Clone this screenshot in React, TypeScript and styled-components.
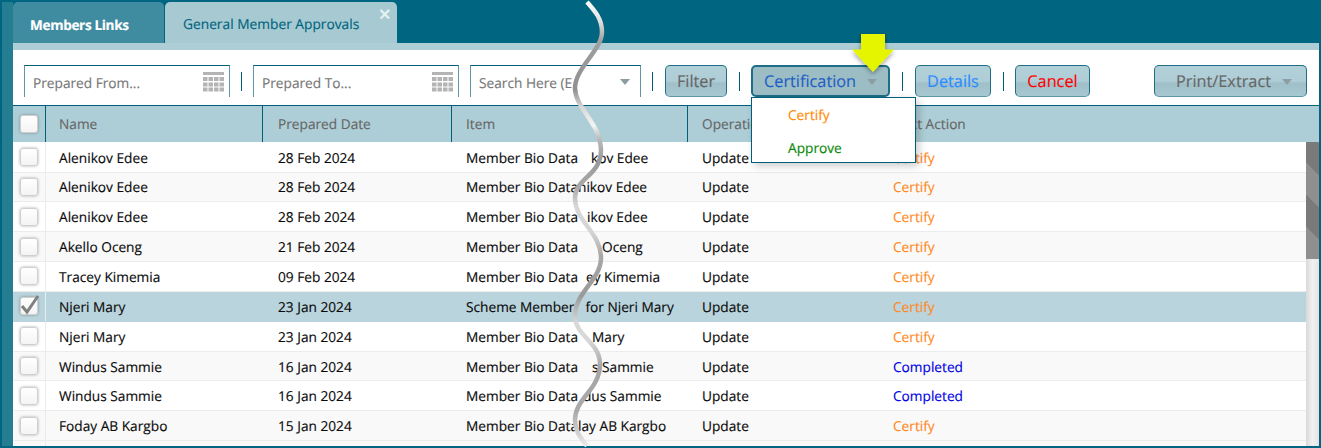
import React from "react";
import styled, { createGlobalStyle } from "styled-components";

const Global = createGlobalStyle`
  html, body { margin: 0; padding: 0; background: #006580; }
  body {
    width: 1321px; height: 448px; overflow: hidden;
    font-family: "Open Sans", "Liberation Sans", sans-serif;
    text-rendering: geometricPrecision;
    -webkit-text-stroke: 0.15px currentColor;
  }
  * { box-sizing: border-box; }
`;

const COLS = "33px 217px 189px 236px 190px 1fr";

const Shell = styled.div`
  position: relative;
  width: 1321px;
  height: 448px;
  display: flex;
  border: 2px solid #006580;
  background: #006580;
`;
const Rail = styled.div`
  width: 11px;
  flex: none;
  background: #257d92;
`;
const Main = styled.div`
  flex: 1;
  min-width: 0;
  display: flex;
  flex-direction: column;
`;
const Tabs = styled.div`
  height: 41px;
  flex: none;
  display: flex;
  gap: 1px;
`;
const Tab = styled.div<{ $active?: boolean }>`
  position: relative;
  width: ${(p) => (p.$active ? 232 : 151)}px;
  border-radius: 5px 5px 0 0;
  padding-left: ${(p) => (p.$active ? 18 : 17)}px;
  line-height: 45px;
  font-size: ${(p) => (p.$active ? 13.75 : 13.6)}px;
  font-weight: ${(p) => (p.$active ? 400 : 700)};
  letter-spacing: ${(p) => (p.$active ? 0 : -0.35)}px;
  color: ${(p) => (p.$active ? "#006580" : "#fff")};
  background: ${(p) => (p.$active ? "#a7cad2" : "#3f8b9f")};
`;
const Close = styled.span`
  position: absolute;
  top: 4px;
  right: 6px;
  font-size: 22px;
  font-weight: 600;
  line-height: 16px;
  color: #e8f2f4;
`;
const Strip = styled.div`
  height: 7px;
  flex: none;
  background: #aeced7;
`;
const Toolbar = styled.div`
  height: 55px;
  flex: none;
  display: flex;
  align-items: flex-start;
  padding: 15px 12px 0 11px;
  background: #fff;
`;
const Field = styled.div<{ $w: number }>`
  width: ${(p) => p.$w}px;
  height: 32px;
  flex: none;
  display: flex;
  align-items: center;
  justify-content: space-between;
  padding: 3px 5px 0 8px;
  border: 1px solid #5e98a8;
  border-top-color: #00607a;
  border-bottom: 0;
  font-size: 13.7px;
  color: #777;
  overflow: hidden;
  white-space: nowrap;
  & > svg { margin-top: -2px; }
`;
const Gap = styled.div`
  width: 11px;
  flex: none;
`;
const Sep = styled.div<{ $l?: number; $r?: number }>`
  width: 1px;
  height: 19px;
  margin: 7px ${(p) => p.$r ?? 11}px 0 ${(p) => p.$l ?? 11}px;
  flex: none;
  background: #00607a;
`;
const Btn = styled.div<{ $w: number; $color: string; $strong?: boolean; $pad?: number }>`
  position: relative;
  width: ${(p) => p.$w}px;
  height: 32px;
  flex: none;
  display: flex;
  align-items: center;
  justify-content: ${(p) => (p.$pad ? "flex-start" : "center")};
  padding-left: ${(p) => p.$pad ?? 0}px;
  gap: 11px;
  font-size: 16.3px;
  color: ${(p) => p.$color};
  border: ${(p) => (p.$strong ? 2 : 1)}px solid #1c6f86;
  ${(p) => (!p.$strong ? "border-bottom-color:#5e98a8;" : "")}
  border-radius: 5px;
  background: ${(p) =>
    p.$strong
      ? "#9dbdc5"
      : "linear-gradient(#b1d0d8 0, #aecdd6 50%, #a0c0c9 58%, #a7c8d1 100%)"};
`;
const Caret = styled.span<{ $color?: string }>`
  width: 0;
  height: 0;
  flex: none;
  margin-top: 2px;
  border-left: 5.5px solid transparent;
  border-right: 5.5px solid transparent;
  border-top: 6px solid ${(p) => p.$color ?? "#8d9ea3"};
`;
const SearchCaret = styled(Caret)`
  margin: 0 5px 2px 0;
`;
const Menu = styled.div`
  position: absolute;
  z-index: 3;
  top: 30px;
  left: -2px;
  width: 165px;
  height: 66px;
  padding-left: 36px;
  background: #fff;
  border: 1px solid #00607a;
  box-shadow: 3px 3px 8px rgba(0, 0, 0, 0.2);
  font-size: 13.7px;
`;
const MenuItem = styled.div<{ $color: string }>`
  height: 33px;
  line-height: 36px;
  color: ${(p) => p.$color};
`;
const RightBtn = styled.div`
  margin-left: auto;
  flex: none;
`;
const Head = styled.div`
  height: 37px;
  flex: none;
  display: grid;
  grid-template-columns: ${COLS};
  border-top: 1px solid #00607a;
  background: #aeced7;
  font-size: 13.7px;
  color: #666;
`;
const HeadCell = styled.div`
  display: flex;
  align-items: center;
  padding: 1px 0 0 14px;
  white-space: nowrap;
  border-right: 1px solid #00607a;
  &:nth-child(2) { padding-left: 13px; }
  &:nth-child(3) { padding-left: 15px; }
  &:last-child { border-right: 0; }
`;
const BoxCell = styled.div<{ $line: string }>`
  display: flex;
  align-items: center;
  padding-left: 7px;
  border-right: 1px solid ${(p) => p.$line};
`;
const Box = styled.div`
  position: relative;
  width: 18px;
  height: 18px;
  border-radius: 3px;
  background: linear-gradient(#fff, #f4f4f4);
  border: 1px solid #cfcfcf;
  box-shadow: 0 0 3px rgba(0, 0, 0, 0.32);
`;
const Tick = styled.svg`
  position: absolute;
  left: -1px;
  top: -5px;
`;
const Body = styled.div`
  flex: 1;
  min-height: 0;
  display: flex;
  overflow: hidden;
  background: #fff;
`;
const Rows = styled.div`
  flex: 1;
  min-width: 0;
  padding-top: 0.7px;
`;
const Row = styled.div<{ $bg: string }>`
  height: 29.85px;
  display: grid;
  grid-template-columns: ${COLS};
  border-bottom: 1px solid ${(p) => (p.$bg === "#b9d4dc" ? "#b9d4dc" : "#ececec")};
  background: ${(p) => p.$bg};
  font-size: 13.7px;
  color: #0a0a0a;
`;
const Cell = styled.div<{ $color?: string }>`
  display: flex;
  align-items: center;
  padding: 2px 0 0 14px;
  white-space: nowrap;
  color: ${(p) => p.$color ?? "inherit"};
  &:nth-child(2) { padding-left: 13px; }
  &:nth-child(3) { padding-left: 15px; }
  &:nth-child(6) { padding-left: 15px; }
`;
const Tail = styled.span<{ $gap: number }>`
  margin-left: ${(p) => p.$gap}px;
`;
const Scroll = styled.div`
  width: 13px;
  flex: none;
  display: flex;
  flex-direction: column;
  background: linear-gradient(90deg, #d8d8d8, #f1f1f1 50%, #e4e4e4);
`;
const Thumb = styled.div`
  height: 117px;
  background: repeating-linear-gradient(
    45deg,
    #8f8f8f 0 22.8px,
    #7a7a7a 22.8px 45.6px
  );
`;
const Overlay = styled.svg`
  position: absolute;
  z-index: 5;
  left: -2px;
  top: -2px;
  pointer-events: none;
`;

const Cal = () => (
  <svg width="21" height="21" viewBox="0 0 21 21" fill="#b4b4b4">
    <rect x="0" y="0" width="21" height="3" />
    {[5, 10, 15].map((y, j) =>
      [0, 5.5, 11, 16.5].map((x) => (
        <rect key={`${x}-${y}`} x={x} y={y + (j ? 0.5 : 0)} width="4.5" height="4" />
      ))
    )}
  </svg>
);

type R = { name: string; date: string; item: string; tail?: string; gap?: number; next: string };
const data: R[] = [
  { name: "Alenikov Edee", date: "28 Feb 2024", item: "Member Bio Data", tail: "kov Edee", gap: 13, next: "Certify" },
  { name: "Alenikov Edee", date: "28 Feb 2024", item: "Member Bio Data", tail: "nikov Edee", gap: 0, next: "Certify" },
  { name: "Alenikov Edee", date: "28 Feb 2024", item: "Member Bio Data", tail: "ikov Edee", gap: 9, next: "Certify" },
  { name: "Akello Oceng", date: "21 Feb 2024", item: "Member Bio Data", tail: "Oceng", gap: 24, next: "Certify" },
  { name: "Tracey Kimemia", date: "09 Feb 2024", item: "Member Bio Data", tail: "ey Kimemia", gap: 8, next: "Certify" },
  { name: "Njeri Mary", date: "23 Jan 2024", item: "Scheme Member", tail: "for Njeri Mary", gap: 11, next: "Certify" },
  { name: "Njeri Mary", date: "23 Jan 2024", item: "Member Bio Data", tail: "Mary", gap: 14, next: "Certify" },
  { name: "Windus Sammie", date: "16 Jan 2024", item: "Member Bio Data", tail: "s Sammie", gap: 14, next: "Completed" },
  { name: "Windus Sammie", date: "16 Jan 2024", item: "Member Bio Data", tail: "dus Sammie", gap: 5, next: "Completed" },
  { name: "Foday AB Kargbo", date: "15 Jan 2024", item: "Member Bio Data", tail: "lay AB Kargbo", gap: 0, next: "Certify" },
];

const wave =
  "M587 2 C594 10 602 18 602 32 C602 50 575 68 575 88 C575 108 600 122 601 150 C601 176 575 178 575 198 C575 222 601 232 601 258 C601 280 575 292 575 316 C575 336 600 342 600 364 C600 390 575 398 575 420 C575 432 581 438 587 446";

export default function App() {
  return (
    <Shell>
      <Global />
      <Rail />
      <Main>
        <Tabs>
          <Tab>Members Links</Tab>
          <Tab $active>
            General Member Approvals
            <Close>×</Close>
          </Tab>
        </Tabs>
        <Strip />
        <Toolbar>
          <Field $w={206}>
            Prepared From...
            <Cal />
          </Field>
          <Sep />
          <Field $w={206}>
            Prepared To...
            <Cal />
          </Field>
          <Gap />
          <Field $w={171}>
            Search Here (E
            <SearchCaret />
          </Field>
          <Sep $r={12} />
          <Btn $w={62} $color="#666">Filter</Btn>
          <Sep $l={12} />
          <Btn $w={139} $color="#1f5fc4" $strong $pad={11}>
            Certification
            <Caret />
            <Menu>
              <MenuItem $color="#ff8a00">Certify</MenuItem>
              <MenuItem $color="#0a8a0a">Approve</MenuItem>
            </Menu>
          </Btn>
          <Sep $r={12} $l={12} />
          <Btn $w={76} $color="#2a8cff">Details</Btn>
          <Sep $l={12} />
          <Btn $w={75} $color="#ff0000">Cancel</Btn>
          <RightBtn>
            <Btn $w={153} $color="#666" $pad={21}>
              Print/Extract
              <Caret />
            </Btn>
          </RightBtn>
        </Toolbar>
        <Head>
          <BoxCell $line="#00607a"><Box /></BoxCell>
          <HeadCell>Name</HeadCell>
          <HeadCell>Prepared Date</HeadCell>
          <HeadCell>Item</HeadCell>
          <HeadCell>Operation</HeadCell>
          <HeadCell>Next Action</HeadCell>
        </Head>
        <Body>
          <Rows>
            {data.map((r, i) => {
              const sel = i === 5;
              const bg = sel ? "#b9d4dc" : i % 2 ? "#f9f9f9" : "#fff";
              return (
                <Row key={i} $bg={bg}>
                  <BoxCell $line={sel ? "#e6f0f2" : "#ececec"}>
                    <Box>
                      {sel && (
                        <Tick width="20" height="22" viewBox="0 0 20 22" fill="none">
                          <path d="M2 13 L7 19 L18 3" stroke="#808080" strokeWidth="3" />
                        </Tick>
                      )}
                    </Box>
                  </BoxCell>
                  <Cell>{r.name}</Cell>
                  <Cell>{r.date}</Cell>
                  <Cell>
                    {r.item}
                    {r.tail && <Tail $gap={r.gap ?? 0}>{r.tail}</Tail>}
                  </Cell>
                  <Cell>Update</Cell>
                  <Cell $color={r.next === "Completed" ? "#0000e6" : "#ff8a1e"}>{r.next}</Cell>
                </Row>
              );
            })}
            <Row $bg="#f9f9f9">
              <BoxCell $line="#ececec" />
            </Row>
          </Rows>
          <Scroll>
            <Thumb />
          </Scroll>
        </Body>
      </Main>
      <Overlay width="1321" height="448" viewBox="0 0 1321 448">
        <defs>
          <linearGradient id="w" gradientUnits="userSpaceOnUse" x1="0" y1="0" x2="0" y2="448">
            <stop offset="0" stopColor="#fff" />
            <stop offset="0.05" stopColor="#ddd" />
            <stop offset="0.09" stopColor="#a0a0a0" />
            <stop offset="0.2" stopColor="#909090" />
            <stop offset="0.24" stopColor="#d8d8d8" />
            <stop offset="0.28" stopColor="#f4f4f4" />
            <stop offset="0.31" stopColor="#bbb" />
            <stop offset="0.36" stopColor="#999" />
            <stop offset="0.42" stopColor="#aaa" />
            <stop offset="0.46" stopColor="#d8d8d8" />
            <stop offset="0.52" stopColor="#d4d4d4" />
            <stop offset="0.57" stopColor="#a8a8a8" />
            <stop offset="0.66" stopColor="#999" />
            <stop offset="0.72" stopColor="#d8d8d8" />
            <stop offset="0.76" stopColor="#d8d8d8" />
            <stop offset="0.82" stopColor="#a5a5a5" />
            <stop offset="0.92" stopColor="#aaa" />
            <stop offset="1" stopColor="#eee" />
          </linearGradient>
          <filter id="s" x="-40%" y="-40%" width="180%" height="180%">
            <feDropShadow dx="0" dy="2" stdDeviation="2.5" floodColor="#000" floodOpacity="0.4" />
          </filter>
        </defs>
        <path d={wave} fill="none" stroke="url(#w)" strokeWidth="4.5" />
        <path
          d="M861 34 H885 V49.5 H894 L873 72 L852 49.5 H861 Z"
          fill="#e5f500"
          filter="url(#s)"
        />
      </Overlay>
    </Shell>
  );
}
